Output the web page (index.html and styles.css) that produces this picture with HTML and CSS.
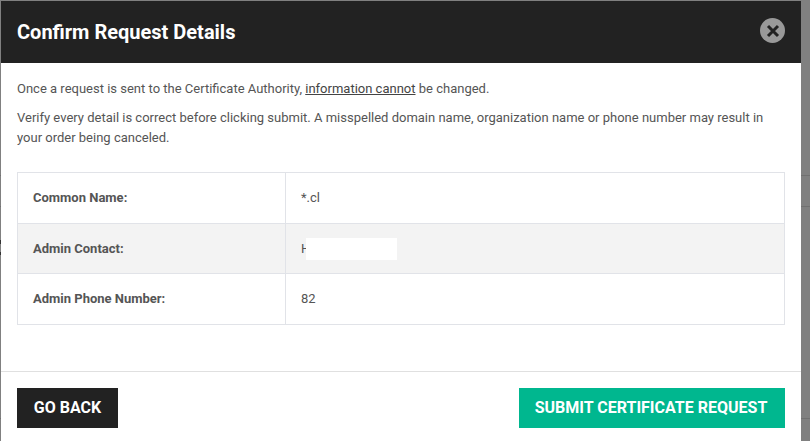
FILE: index.html
```html
<!DOCTYPE html>
<html lang="en">
<head>
    <meta charset="UTF-8">
    <meta name="viewport" content="width=device-width, initial-scale=1.0">
    <title>Confirm Request Details</title>
    <link rel="stylesheet" href="styles.css">
</head>
<body>
    <div class="modal">
        <div class="modal-header">
            <h2>Confirm Request Details</h2>
            <button class="close-button" aria-label="Close">
                <svg width="14" height="14" viewBox="0 0 14 14">
                    <path d="M2 2L12 12M12 2L2 12" stroke="#222" stroke-width="3" fill="none"/>
                </svg>
            </button>
        </div>

        <div class="modal-body">
            <p>Once a request is sent to the Certificate Authority, <u>information cannot</u> be changed.</p>
            <p>Verify every detail is correct before clicking submit. A misspelled domain name, organization name or phone number may result in your order being canceled.</p>

            <table class="details-table">
                <tr>
                    <th>Common Name:</th>
                    <td>*.cl</td>
                </tr>
                <tr class="shaded">
                    <th>Admin Contact:</th>
                    <td class="redacted-cell">H<span class="redaction"></span></td>
                </tr>
                <tr>
                    <th>Admin Phone Number:</th>
                    <td>82</td>
                </tr>
            </table>
        </div>

        <div class="modal-footer">
            <button class="btn btn-back">GO BACK</button>
            <button class="btn btn-submit">SUBMIT CERTIFICATE REQUEST</button>
        </div>
    </div>
</body>
</html>
```

FILE: styles.css
```css
html, body {
    margin: 0;
    height: 100%;
    overflow: hidden;
}

/* dimmed page behind the modal, only its row lines show at the edges */
body {
    background-color: #808080;
    background-image:
        linear-gradient(#707070, #707070),
        linear-gradient(#707070, #707070),
        linear-gradient(#707070, #707070),
        linear-gradient(#333, #333),
        linear-gradient(#333, #333);
    background-size: 100% 1px, 100% 1px, 100% 1px, 1px 4px, 1px 3px;
    background-position: 0 175px, 0 206px, 0 418px, 0 240px, 0 252px;
    background-repeat: no-repeat;
    font-family: Roboto, "Liberation Sans", sans-serif;
    color: #555;
}

.modal {
    width: 800px;
    height: 440px;
    margin: 1px 0 0 1px;
    background-color: #fff;
    display: flex;
    flex-direction: column;
}

.modal-header {
    height: 62px;
    padding: 0 16px;
    background-color: #222;
    display: flex;
    align-items: center;
    justify-content: space-between;
}

.modal-header h2 {
    margin: 0;
    font-size: 20px;
    font-weight: 700;
    color: #fff;
}

.close-button {
    width: 25px;
    height: 25px;
    padding: 0;
    margin-bottom: 3px;
    border: none;
    border-radius: 50%;
    background-color: #999;
    display: flex;
    align-items: center;
    justify-content: center;
}

.modal-body {
    flex: 1;
    padding: 16px 16px 0;
    font-size: 13px;
    line-height: 20px;
}

.modal-body p {
    margin: 0 0 9px;
}

.modal-body u {
    color: #444;
}

.details-table {
    width: 768px;
    margin-top: 24px;
    border-collapse: collapse;
    table-layout: fixed;
}

.details-table th,
.details-table td {
    height: 50px;
    padding: 0 15px;
    border: 1px solid #e1e3e8;
    text-align: left;
}

.details-table th {
    width: 237px;
    font-weight: 700;
}

.details-table .shaded th,
.details-table .shaded td {
    height: 49px;
}

.shaded {
    background-color: #f3f3f3;
}

.redacted-cell {
    position: relative;
}

.redaction {
    position: absolute;
    left: 20px;
    top: 14px;
    width: 91px;
    height: 22px;
    background-color: #fff;
}

.modal-footer {
    padding: 16px 16px 13px;
    border-top: 1px solid #e0e0e0;
    display: flex;
    justify-content: space-between;
}

.btn {
    height: 40px;
    padding: 0 0 2px;
    border: none;
    font-family: inherit;
    font-size: 16px;
    font-weight: 700;
    color: #fff;
    cursor: pointer;
}

.btn-back {
    width: 101px;
    background-color: #222;
}

.btn-submit {
    width: 266px;
    padding-right: 2px;
    background-color: #00b78f;
}
```
